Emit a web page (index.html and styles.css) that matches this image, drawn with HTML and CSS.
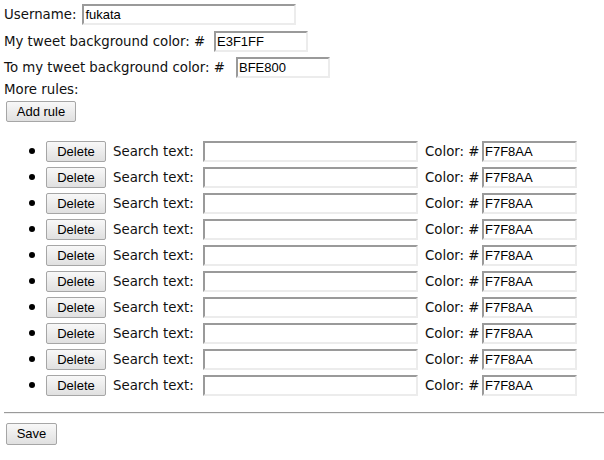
FILE: index.html
```html
<!DOCTYPE html>
<html>
<head>
<meta charset="utf-8">
<link rel="stylesheet" href="styles.css">
</head>
<body>
<div class="form">
  <div class="row row-user"><span class="label">Username:</span><input class="field field-user" type="text" value="fukata"></div>
  <div class="row"><span class="label label-my">My tweet background color: #</span><input class="field field-color" type="text" value="E3F1FF"></div>
  <div class="row"><span class="label label-to">To my tweet background color: #</span><input class="field field-color" type="text" value="BFE800"></div>
  <div class="more">More rules:</div>
  <div class="add-wrap"><button class="btn btn-add">Add rule</button></div>
  <ul class="rules">
    <li class="rule"><button class="btn btn-del">Delete</button><span class="label label-search">Search text:</span><input class="field field-search" type="text"><span class="label label-color">Color: #</span><input class="field field-rcolor" type="text" value="F7F8AA"></li>
    <li class="rule"><button class="btn btn-del">Delete</button><span class="label label-search">Search text:</span><input class="field field-search" type="text"><span class="label label-color">Color: #</span><input class="field field-rcolor" type="text" value="F7F8AA"></li>
    <li class="rule"><button class="btn btn-del">Delete</button><span class="label label-search">Search text:</span><input class="field field-search" type="text"><span class="label label-color">Color: #</span><input class="field field-rcolor" type="text" value="F7F8AA"></li>
    <li class="rule"><button class="btn btn-del">Delete</button><span class="label label-search">Search text:</span><input class="field field-search" type="text"><span class="label label-color">Color: #</span><input class="field field-rcolor" type="text" value="F7F8AA"></li>
    <li class="rule"><button class="btn btn-del">Delete</button><span class="label label-search">Search text:</span><input class="field field-search" type="text"><span class="label label-color">Color: #</span><input class="field field-rcolor" type="text" value="F7F8AA"></li>
    <li class="rule"><button class="btn btn-del">Delete</button><span class="label label-search">Search text:</span><input class="field field-search" type="text"><span class="label label-color">Color: #</span><input class="field field-rcolor" type="text" value="F7F8AA"></li>
    <li class="rule"><button class="btn btn-del">Delete</button><span class="label label-search">Search text:</span><input class="field field-search" type="text"><span class="label label-color">Color: #</span><input class="field field-rcolor" type="text" value="F7F8AA"></li>
    <li class="rule"><button class="btn btn-del">Delete</button><span class="label label-search">Search text:</span><input class="field field-search" type="text"><span class="label label-color">Color: #</span><input class="field field-rcolor" type="text" value="F7F8AA"></li>
    <li class="rule"><button class="btn btn-del">Delete</button><span class="label label-search">Search text:</span><input class="field field-search" type="text"><span class="label label-color">Color: #</span><input class="field field-rcolor" type="text" value="F7F8AA"></li>
    <li class="rule"><button class="btn btn-del">Delete</button><span class="label label-search">Search text:</span><input class="field field-search" type="text"><span class="label label-color">Color: #</span><input class="field field-rcolor" type="text" value="F7F8AA"></li>
  </ul>
  <hr class="sep">
  <div class="save-wrap"><button class="btn btn-save">Save</button></div>
</div>
</body>
</html>
```

FILE: styles.css
```css
html, body {
  margin: 0;
  padding: 0;
  background: #ffffff;
}

body {
  padding: 4px 0 0 4px;
  font-family: "DejaVu Sans", sans-serif;
  font-size: 13.33px;
  color: #111111;
  overflow: hidden;
}

.form {
  display: flex;
  flex-direction: column;
}

.row {
  display: flex;
  align-items: center;
  height: 21px;
  gap: 8px;
  margin-bottom: 5.5px;
}

.row-user {
  gap: 6px;
}

.label {
  white-space: nowrap;
  flex: none;
}

.label-my { width: 202px; }
.label-to { width: 224px; }
.label-search { width: 83px; }
.label-color { width: 53px; }

.field {
  box-sizing: border-box;
  flex: none;
  height: 21px;
  margin: 0;
  padding: 0 1px;
  border: 2px solid;
  border-color: #9a9a9a #ececec #ececec #9a9a9a;
  font-family: "Liberation Sans", Arial, sans-serif;
  font-size: 13px;
  color: #000000;
  background: #ffffff;
  outline: none;
}

.field-user { width: 214px; }
.field-color { width: 94px; }
.field-search { width: 215px; }
.field-rcolor { width: 95px; }

.more {
  margin-top: -2px;
  line-height: 16px;
}

.add-wrap {
  margin-top: 3px;
  padding-left: 2px;
}

.btn {
  box-sizing: border-box;
  flex: none;
  height: 21px;
  margin: 0;
  padding: 0 6px;
  border: 1px solid #a6a6a6;
  border-radius: 2px;
  background: linear-gradient(#f8f8f8, #e0e0e0);
  font-family: "Liberation Sans", Arial, sans-serif;
  font-size: 13px;
  color: #000000;
}

.btn-add { width: 70px; }
.btn-del { width: 60px; }
.btn-save { width: 51px; height: 22px; }

.rules {
  list-style: none;
  margin: 19px 0 0 0;
  padding: 0 0 0 25px;
  display: flex;
  flex-direction: column;
  gap: 5px;
}

.rule {
  display: flex;
  align-items: center;
  height: 21px;
  gap: 7px;
}

.rule::before {
  content: "";
  flex: none;
  width: 6px;
  height: 6px;
  border-radius: 50%;
  background: #000000;
  margin-right: 4px;
}

.rule .label-color + .field-rcolor {
  margin-left: -3px;
}

.sep {
  margin: 16px 0 0 0;
  height: 0;
  border: 0;
  border-top: 1px solid #9a9a9a;
  border-bottom: 1px solid #eeeeee;
}

.save-wrap {
  margin-top: 9px;
  padding-left: 2px;
}
```
